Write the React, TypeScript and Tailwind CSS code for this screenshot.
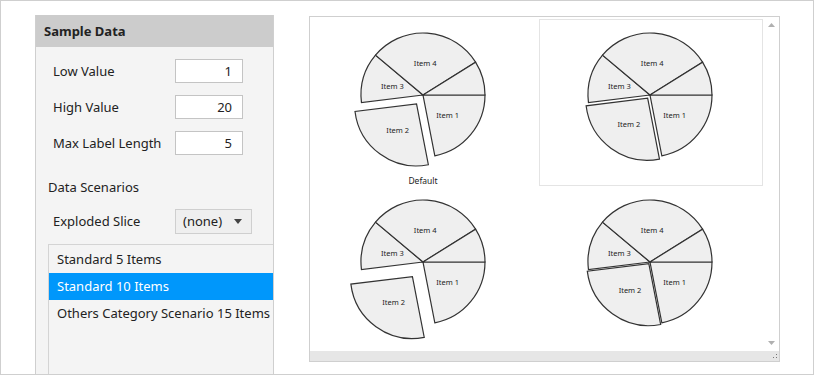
import React from 'react';

const font = { fontFamily: '"Segoe UI", "Noto Sans", "Open Sans", sans-serif' };

interface Slice {
  a0: number;
  a1: number;
  label: string;
}

// angles in degrees, clockwise from the right
const slices: Slice[] = [
  { a0: 0, a1: 79, label: 'Item 1' },
  { a0: 79, a1: 173, label: 'Item 2' },
  { a0: 173, a1: 220, label: 'Item 3' },
  { a0: 220, a1: 328, label: 'Item 4' },
  { a0: 328, a1: 360, label: '' },
];

const rad = (d: number) => (d * Math.PI) / 180;

function slicePath(cx: number, cy: number, r: number, a0: number, a1: number) {
  const x0 = cx + r * Math.cos(rad(a0));
  const y0 = cy + r * Math.sin(rad(a0));
  const x1 = cx + r * Math.cos(rad(a1));
  const y1 = cy + r * Math.sin(rad(a1));
  const large = a1 - a0 > 180 ? 1 : 0;
  return `M${cx},${cy} L${x0.toFixed(2)},${y0.toFixed(2)} A${r},${r} 0 ${large} 1 ${x1.toFixed(2)},${y1.toFixed(2)} Z`;
}

interface PieProps {
  explode: number;
  title?: string;
  selected?: boolean;
}

const PieCell: React.FC<PieProps> = ({ explode, title, selected }) => {
  const cx = 111;
  const cy = 76;
  const r = 62;

  return (
    <div
      className={`h-[167px] w-[224px] border ${selected ? 'border-[#e4e4e4]' : 'border-transparent'}`}
    >
      <svg width="222" height="165" viewBox="1 1 222 165" overflow="visible" className="block">
        {slices.map((s, i) => {
          const mid = (s.a0 + s.a1) / 2;
          const d = i === 1 ? explode : 0;
          const px = cx + d * Math.cos(rad(mid));
          const py = cy + d * Math.sin(rad(mid));
          return (
            <g key={i}>
              <path
                d={slicePath(px, py, r, s.a0, s.a1)}
                fill="#efefef"
                stroke="#333"
                strokeWidth="1.2"
              />
              {s.label && (
                <text
                  x={px + 32 * Math.cos(rad(mid))}
                  y={py + 32 * Math.sin(rad(mid)) + 1}
                  fontSize="7.5"
                  textAnchor="middle"
                  dominantBaseline="middle"
                  fill="#222"
                  style={font}
                >
                  {s.label}
                </text>
              )}
            </g>
          );
        })}
        {title && (
          <text x={cx} y={163} fontSize="8.5" textAnchor="middle" dominantBaseline="middle" fill="#222" style={font}>
            {title}
          </text>
        )}
      </svg>
    </div>
  );
};

const FieldRow: React.FC<{ label: string; value: string }> = ({ label, value }) => (
  <div className="flex h-[24px] items-center">
    <span className="w-[139px] shrink-0 whitespace-nowrap pl-[17px] pt-[2px] text-[13px] text-[#222]">{label}</span>
    <div className="flex h-[24px] w-[68px] shrink-0 items-center justify-end border border-[#c4c4c4] bg-white pr-[10px] pt-[1px] text-[13px] text-[#222]">
      {value}
    </div>
  </div>
);

export default function App() {
  const items = ['Standard 5 Items', 'Standard 10 Items', 'Others Category Scenario 15 Items'];

  return (
    <div
      className="flex h-[375px] w-[814px] overflow-hidden border border-[#cfcfcf] bg-white pl-[34px] pt-[14px]"
      style={font}
    >
      {/* Sample data panel */}
      <div className="flex h-[400px] w-[239px] shrink-0 flex-col border-x border-[#cfcfcf] bg-[#f4f4f4]">
        <div className="flex h-[32px] items-center bg-[#cccccc] pl-[8px] pt-[2px] text-[13px] font-bold text-[#222]">
          Sample Data
        </div>

        <div className="mt-[12px] flex flex-col gap-[12px]">
          <FieldRow label="Low Value" value="1" />
          <FieldRow label="High Value" value="20" />
          <FieldRow label="Max Label Length" value="5" />
        </div>

        <div className="mt-[23px] pl-[12px] text-[13px] text-[#222]">Data Scenarios</div>

        <div className="mt-[11px] flex h-[25px] items-center">
          <span className="w-[139px] shrink-0 whitespace-nowrap pl-[17px] pt-[2px] text-[13px] text-[#222]">Exploded Slice</span>
          <div className="flex h-[25px] w-[77px] shrink-0 items-center justify-between border border-[#cfcfcf] bg-[#efefef] pl-[7px] pr-[9px] text-[13px] text-[#222]">
            <span className="pt-[1px]">(none)</span>
            <svg width="8" height="5" viewBox="0 0 8 5">
              <path d="M0 0 L8 0 L4 5 Z" fill="#444" />
            </svg>
          </div>
        </div>

        <div className="ml-[12px] mt-[10px] flex-1 border-l border-t border-[#d4d4d4] pt-[1px]">
          {items.map((it, i) => (
            <div
              key={it}
              className={`flex h-[27px] items-center whitespace-nowrap pl-[8px] pt-[2px] text-[13px] ${
                i === 1 ? 'bg-[#0097fb] text-white' : 'text-[#222]'
              }`}
            >
              {it}
            </div>
          ))}
        </div>
      </div>

      {/* Chart area */}
      <div className="ml-[35px] mt-[1px] flex h-[346px] w-[471px] shrink-0 flex-col border border-[#cfcfcf]">
        <div className="flex min-h-0 flex-1">
          <div className="flex-1 overflow-hidden pl-[2px] pt-[2px]">
            <div className="grid grid-cols-[224px_224px] gap-x-[3px]">
              <PieCell explode={11} title="Default" />
              <PieCell explode={4} selected />
              <PieCell explode={18} />
              <PieCell explode={2} />
            </div>
          </div>
          <div className="flex w-[16px] flex-col items-center justify-between pb-[6px] pt-[6px]">
            <svg width="7" height="4" viewBox="0 0 7 4">
              <path d="M0 4 L7 4 L3.5 0 Z" fill="#b0b0b0" />
            </svg>
            <svg width="7" height="4" viewBox="0 0 7 4">
              <path d="M0 0 L7 0 L3.5 4 Z" fill="#b0b0b0" />
            </svg>
          </div>
        </div>
        <div className="relative h-[10px] bg-[#e6e6e6]">
          <svg width="6" height="6" viewBox="0 0 6 6" className="absolute bottom-[1px] right-[1px]">
            <rect x="4" y="0" width="1" height="1" fill="#777" />
            <rect x="1" y="3" width="1" height="1" fill="#777" />
            <rect x="4" y="3" width="1" height="1" fill="#777" />
          </svg>
        </div>
      </div>
    </div>
  );
}
